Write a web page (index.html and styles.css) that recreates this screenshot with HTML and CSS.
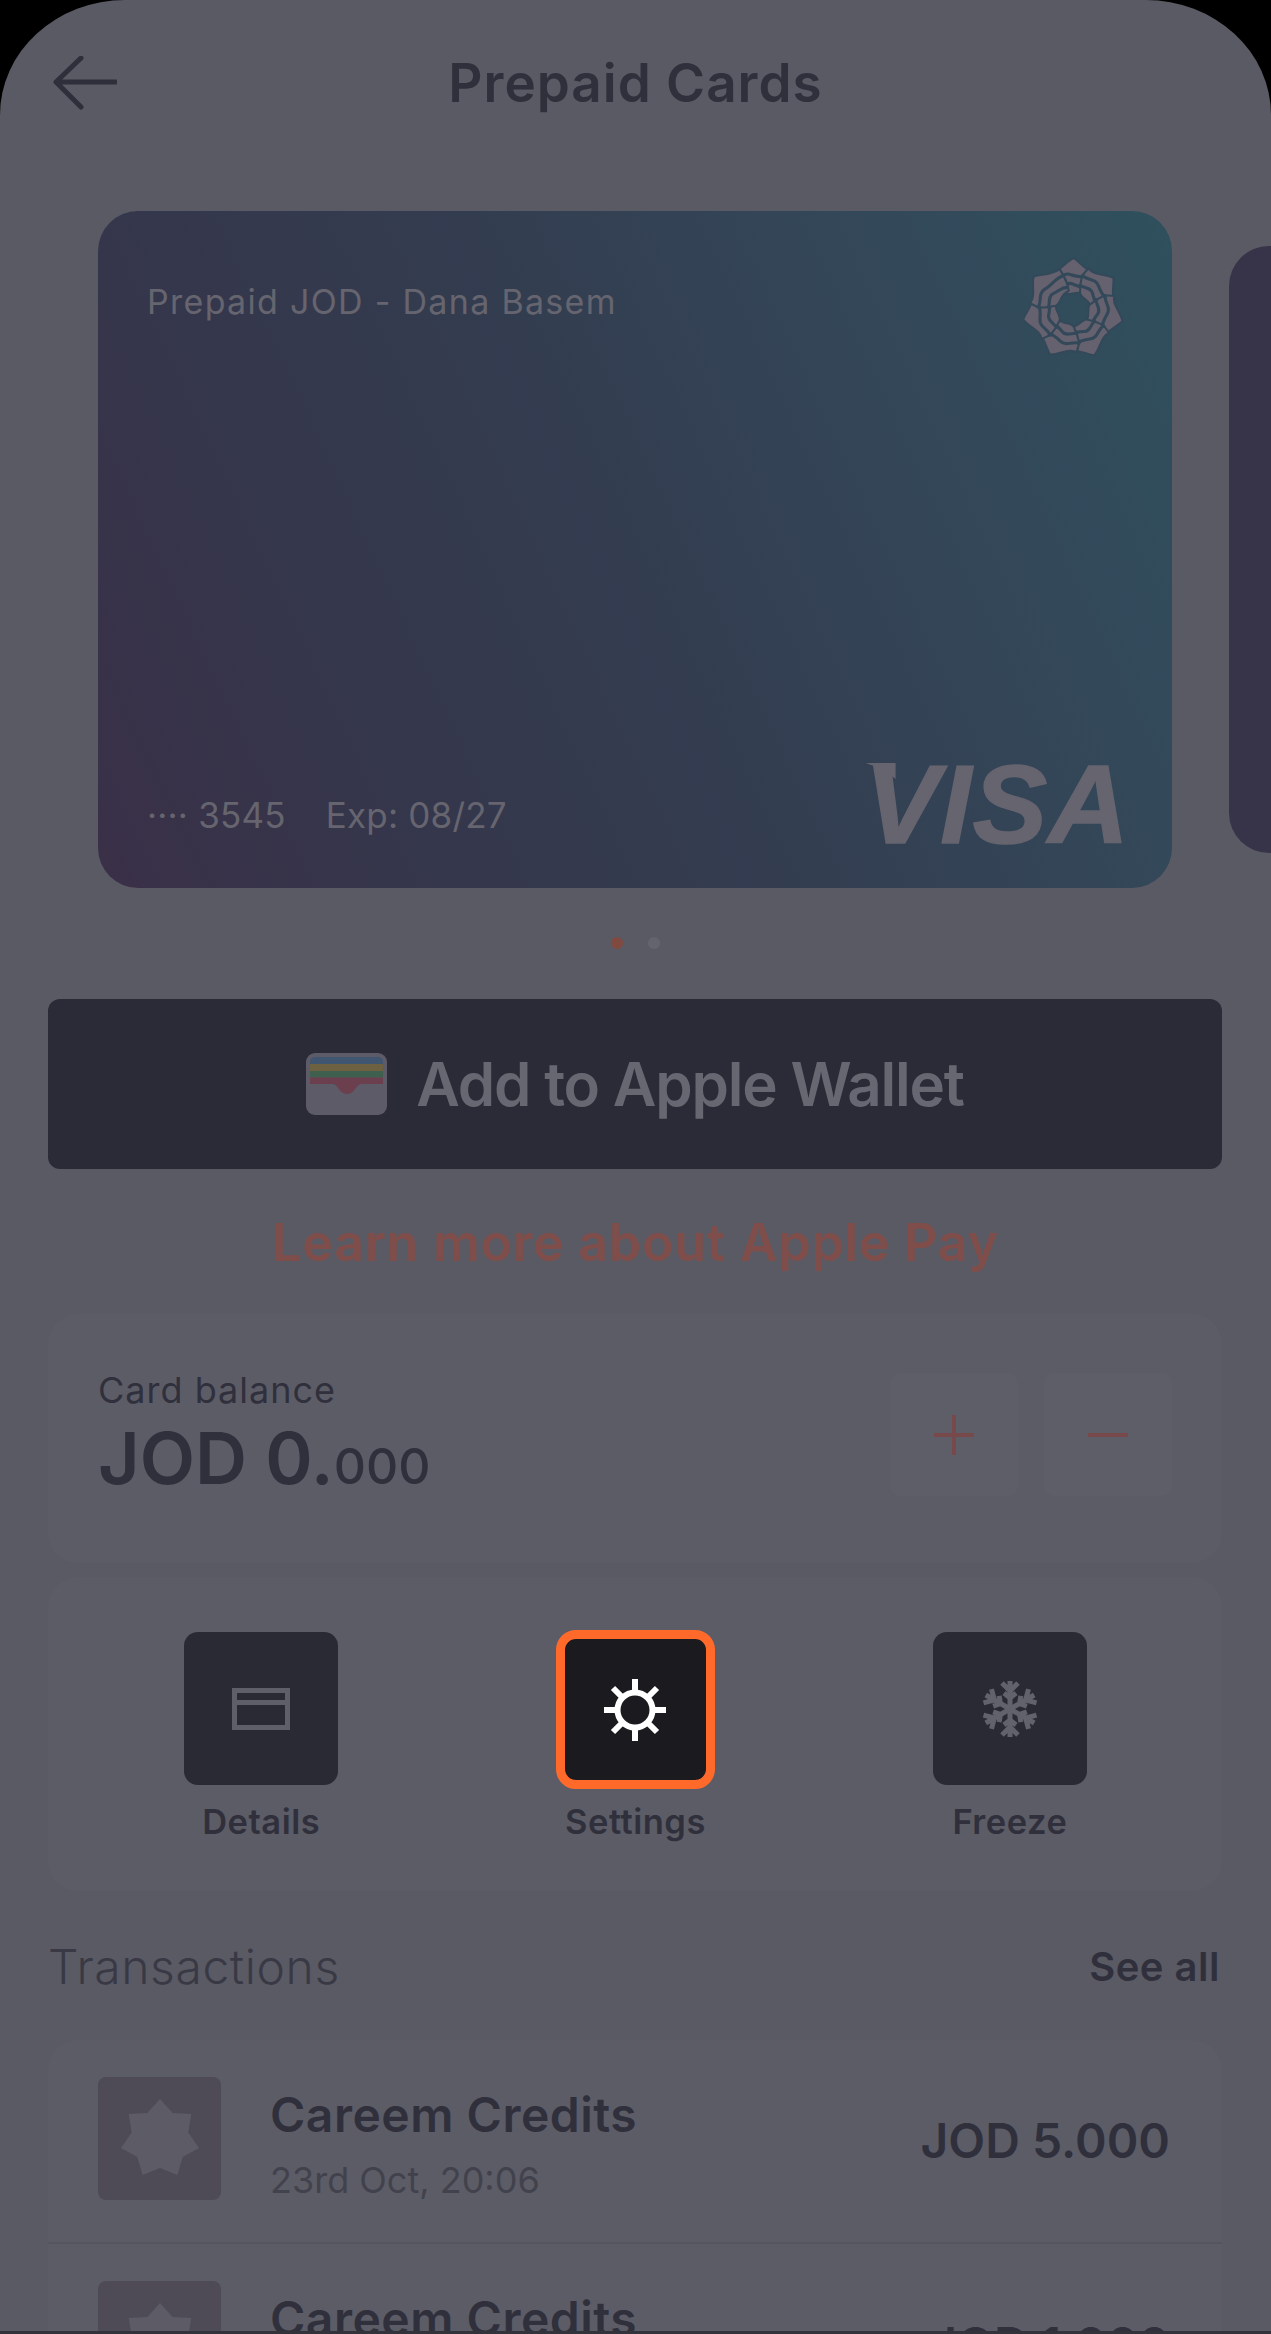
FILE: index.html
```html
<!DOCTYPE html>
<html lang="en">
<head>
  <meta charset="UTF-8" />
  <meta name="viewport" content="width=device-width, initial-scale=1.0"/>
  <title>Prepaid Cards</title>
  <link rel="stylesheet" href="styles.css">
</head>
<body>

<div class="screen">
  <header class="top-bar">
    <svg class="back" width="64" height="54" viewBox="0 0 64 54">
      <path d="M63 26H5M28 2L3 26l25 25" />
    </svg>
    <h1>Prepaid Cards</h1>
  </header>

  <section class="carousel">
    <div class="card">
      <div class="card-top">
        <span class="card-name">Prepaid JOD - Dana Basem</span>
        <svg class="card-logo" width="104" height="104" viewBox="-50 -50 100 100">
          <defs>
            <g id="petal">
              <path class="petal" d="M-8-15C-13-20-21-24-21-36-13-35-7-46 1-49 8-44 12-37 22-34 19-26 17-20 11-14 4-19-3-12-8-15Z" />
              <path class="wave" d="M-21-27C-13-27-10-36-2-33S12-32 20-27M-15-19C-9-20-6-27 0-24S9-22 13-17" />
            </g>
          </defs>
          <use href="#petal" />
          <use href="#petal" transform="rotate(51.4)" />
          <use href="#petal" transform="rotate(102.9)" />
          <use href="#petal" transform="rotate(154.3)" />
          <use href="#petal" transform="rotate(205.7)" />
          <use href="#petal" transform="rotate(257.1)" />
          <use href="#petal" transform="rotate(308.6)" />
        </svg>
      </div>
      <div class="card-bottom">
        <div class="card-meta">
          <span>···· 3545</span>
          <span>Exp: 08/27</span>
        </div>
        <span class="visa">VISA</span>
      </div>
    </div>
    <div class="card-next"></div>
  </section>

  <div class="dots">
    <span class="dot active"></span>
    <span class="dot"></span>
  </div>

  <button class="wallet-btn" type="button">
    <svg width="81" height="62" viewBox="0 0 81 62">
      <rect width="81" height="62" rx="9" fill="#5c5b67" />
      <path d="M4 11V9a5 5 0 0 1 5-5h63a5 5 0 0 1 5 5v2z" fill="#3f5570" />
      <rect x="4" y="11" width="73" height="7" fill="#6e6142" />
      <rect x="4" y="18" width="73" height="6.500" fill="#3f5f4f" />
      <path d="M4 24.500h73V31H55c-5 0-6 10-14 10s-9-10-14-10H4z" fill="#6b3f4d" />
    </svg>
    Add to Apple Wallet
  </button>

  <a class="learn-more" href="#">Learn more about Apple Pay</a>

  <section class="panel balance">
    <div>
      <div class="balance-label">Card balance</div>
      <div class="balance-value">JOD 0.<small>000</small></div>
    </div>
    <div class="balance-actions">
      <button class="square-btn" type="button">
        <svg width="42" height="42" viewBox="0 0 42 42"><path d="M21 1v40M1 21h40" /></svg>
      </button>
      <button class="square-btn" type="button">
        <svg width="42" height="42" viewBox="0 0 42 42"><path d="M1 21h40" /></svg>
      </button>
    </div>
  </section>

  <section class="panel actions">
    <div class="action">
      <div class="tile">
        <svg class="details-icon" width="58" height="42" viewBox="0 0 58 42">
          <path d="M2.500 2.500h53v37h-53zM2.500 14.500h53" />
        </svg>
      </div>
      <span>Details</span>
    </div>
    <div class="action">
      <div class="tile selected">
        <svg class="gear-icon" width="64" height="64" viewBox="-32 -32 64 64">
          <circle r="17.500" />
          <path d="M0-31v13M0 18v13M-31 0h13M18 0h13M-22-22l9 9M13 13l9 9M22-22l-9 9M-13 13l-9 9" />
        </svg>
      </div>
      <span>Settings</span>
    </div>
    <div class="action">
      <div class="tile">
        <svg class="snow-icon" width="60" height="60" viewBox="-30 -30 60 60">
          <defs>
            <path id="arm" d="M0 0V-28M-8-26L0-18 8-26M-6-16L0-11 6-16" />
          </defs>
          <use href="#arm" />
          <use href="#arm" transform="rotate(60)" />
          <use href="#arm" transform="rotate(120)" />
          <use href="#arm" transform="rotate(180)" />
          <use href="#arm" transform="rotate(240)" />
          <use href="#arm" transform="rotate(300)" />
        </svg>
      </div>
      <span>Freeze</span>
    </div>
  </section>

  <div class="section-head">
    <h2>Transactions</h2>
    <a href="#">See all</a>
  </div>

  <section class="panel transactions">
    <div class="tx">
      <div class="tx-icon">
        <svg width="84" height="84" viewBox="-42 -42 84 84">
          <polygon points="0,-40 12.600,-26.100 31.300,-24.900 28.300,-6.500 39,8.900 22.700,18.100 17.400,36 0,29 -17.400,36 -22.700,18.100 -39,8.900 -28.300,-6.500 -31.300,-24.900 -12.600,-26.100" />
        </svg>
      </div>
      <div class="tx-info">
        <div class="tx-title">Careem Credits</div>
        <div class="tx-date">23rd Oct, 20:06</div>
      </div>
      <div class="tx-amount">JOD 5.000</div>
    </div>
    <div class="tx">
      <div class="tx-icon">
        <svg width="84" height="84" viewBox="-42 -42 84 84">
          <polygon points="0,-40 12.600,-26.100 31.300,-24.900 28.300,-6.500 39,8.900 22.700,18.100 17.400,36 0,29 -17.400,36 -22.700,18.100 -39,8.900 -28.300,-6.500 -31.300,-24.900 -12.600,-26.100" />
        </svg>
      </div>
      <div class="tx-info">
        <div class="tx-title">Careem Credits</div>
      </div>
      <div class="tx-amount">JOD 1.000</div>
    </div>
  </section>

  <div class="home-edge"></div>
</div>

</body>
</html>
```

FILE: styles.css
```css
* {
  box-sizing: border-box;
}

body {
  margin: 0;
  background: #000;
  font-family: 'Inter', 'Liberation Sans', sans-serif;
  color: #30303c;
}

.screen {
  position: relative;
  width: 1271px;
  height: 2334px;
  overflow: hidden;
  background: #5a5a64;
  border-radius: 125px 125px 0 0 / 115px 115px 0 0;
}

.top-bar {
  display: grid;
  grid-template-columns: 1fr auto 1fr;
  align-items: center;
  height: 166px;
  padding: 0 53px;
  margin-bottom: 45px;
}

.back path {
  fill: none;
  stroke: #2f2f3b;
  stroke-width: 5;
  stroke-linecap: round;
  stroke-linejoin: round;
}

.top-bar h1 {
  margin: 0;
  font-size: 53px;
  font-weight: 600;
  letter-spacing: 1px;
  color: #30303c;
}

.carousel {
  display: flex;
  align-items: center;
  gap: 57px;
  padding-left: 98px;
  height: 677px;
}

.card {
  flex: none;
  width: 1074px;
  height: 677px;
  padding: 72px 50px 40px 49px;
  border-radius: 40px;
  background: linear-gradient(65deg, #3a3048 0%, #35364b 22%, #333d50 50%, #33495a 80%, #2f505d 100%);
  color: #66656f;
  display: flex;
  flex-direction: column;
  justify-content: space-between;
}

.card-top,
.card-bottom {
  display: flex;
  justify-content: space-between;
}

.card-top {
  align-items: flex-start;
}

.card-bottom {
  align-items: flex-end;
}

.card-name {
  margin-top: -2px;
  font-size: 34px;
  letter-spacing: 1.3px;
}

.card-logo {
  margin: -26px -3px 0 0;
}

.petal {
  fill: #66616e;
  stroke: #33495a;
  stroke-width: 2;
  stroke-linejoin: round;
}

.wave {
  fill: none;
  stroke: #33495a;
  stroke-width: 3;
}

.card-meta {
  display: flex;
  gap: 40px;
  font-size: 35px;
  letter-spacing: 0.2px;
  margin-bottom: 12px;
}

.visa {
  position: relative;
  font-family: 'Liberation Sans', sans-serif;
  font-size: 112px;
  font-weight: 700;
  font-style: italic;
  line-height: 86px;
  margin-right: -8px;
  color: #66646f;
  letter-spacing: 1px;
  -webkit-text-stroke: 1.5px #66646f;
}

.visa::before {
  content: "";
  position: absolute;
  left: 1px;
  top: 1px;
  width: 30px;
  height: 16px;
  background: #66646f;
  clip-path: polygon(0 0, 100% 0, 100% 100%, 60% 40%);
}

.card-next {
  flex: none;
  width: 60px;
  height: 607px;
  border-radius: 40px 0 0 40px;
  background: #37344a;
}

.dots {
  display: flex;
  justify-content: center;
  gap: 25px;
  margin: 49px 0 50px;
}

.dot {
  width: 12px;
  height: 12px;
  border-radius: 50%;
  background: #64646e;
}

.dot.active {
  background: #804a40;
}

.wallet-btn {
  display: flex;
  align-items: center;
  justify-content: center;
  gap: 29px;
  width: 1174px;
  height: 170px;
  margin: 0 0 0 48px;
  border: none;
  border-radius: 12px;
  background: #2b2b37;
  color: #676772;
  font-family: 'Inter', 'Liberation Sans', sans-serif;
  font-size: 60px;
  font-weight: 600;
  letter-spacing: -1.2px;
}

.learn-more {
  display: block;
  margin: 44px 0 41px;
  line-height: 60px;
  text-align: center;
  font-size: 52px;
  font-weight: 600;
  letter-spacing: 0.7px;
  color: #804e4a;
  text-decoration: none;
}

.panel {
  width: 1174px;
  margin-left: 48px;
  background: #5c5c67;
  border-radius: 30px;
}

.balance {
  display: flex;
  justify-content: space-between;
  height: 249px;
  padding: 53px 50px 0;
  margin-bottom: 14px;
}

.balance-label {
  font-size: 36px;
  letter-spacing: 1px;
  line-height: 46px;
}

.balance-value {
  margin-top: 3px;
  font-size: 72px;
  font-weight: 600;
  line-height: 84px;
}

.balance-value small {
  font-size: 50px;
  font-weight: 500;
}

.balance-actions {
  display: flex;
  gap: 26px;
  padding-top: 6px;
}

.square-btn {
  display: flex;
  align-items: center;
  justify-content: center;
  width: 128px;
  height: 123px;
  padding: 0;
  border: none;
  border-radius: 10px;
  background: #5e5e68;
}

.square-btn svg {
  fill: none;
  stroke: #78494a;
  stroke-width: 4;
}

.actions {
  display: grid;
  grid-template-columns: repeat(3, 1fr);
  height: 314px;
  padding: 55px 25px 0 26px;
}

.action {
  display: flex;
  flex-direction: column;
  align-items: center;
  font-size: 34.500px;
  font-weight: 600;
  letter-spacing: 0.5px;
}

.action span {
  margin-top: 14px;
  line-height: 46px;
}

.tile {
  display: flex;
  align-items: center;
  justify-content: center;
  width: 154px;
  height: 153px;
  border-radius: 14px;
  background: #2a2a35;
}

.tile.selected {
  width: 159px;
  height: 159px;
  margin: -2px 0 -4px;
  border: 9px solid #ff6a2b;
  border-radius: 20px;
  background: #1a1a1f;
}

.details-icon path {
  fill: none;
  stroke: #5f5f6a;
  stroke-width: 5;
}

.gear-icon {
  fill: none;
  stroke: #fff;
  stroke-width: 6;
}

.snow-icon {
  fill: none;
  stroke: #62626d;
  stroke-width: 5;
}

.section-head {
  display: flex;
  justify-content: space-between;
  align-items: center;
  height: 50px;
  margin: 50px 0 49px;
  padding: 0 51px 0 48px;
}

.section-head h2 {
  margin: 0;
  font-size: 48px;
  font-weight: 300;
  letter-spacing: 0.6px;
  color: #393945;
}

.section-head a {
  font-size: 40px;
  font-weight: 600;
  letter-spacing: 0.5px;
  color: #30303c;
  text-decoration: none;
}

.transactions {
  border-radius: 30px 30px 0 0;
}

.tx {
  display: flex;
  align-items: flex-start;
  height: 204px;
  padding: 37px 52px 0 50px;
  border-bottom: 2px solid #555560;
}

.tx-icon {
  flex: none;
  display: flex;
  align-items: center;
  justify-content: center;
  width: 123px;
  height: 123px;
  border-radius: 8px;
  background: #4e4b57;
}

.tx-icon polygon {
  fill: #5c5b66;
}

.tx-info {
  flex: 1;
  margin-left: 49px;
}

.tx-title {
  font-size: 48px;
  font-weight: 600;
  letter-spacing: 0.5px;
  line-height: 56px;
  margin-top: 10px;
}

.tx-date {
  margin-top: 15px;
  font-size: 36px;
  line-height: 44px;
  color: #42424d;
}

.tx-amount {
  margin-top: 36px;
  font-size: 48px;
  font-weight: 600;
  line-height: 56px;
}

.home-edge {
  position: absolute;
  left: 0;
  right: 0;
  bottom: 0;
  height: 3px;
  background: #33333b;
}
```
